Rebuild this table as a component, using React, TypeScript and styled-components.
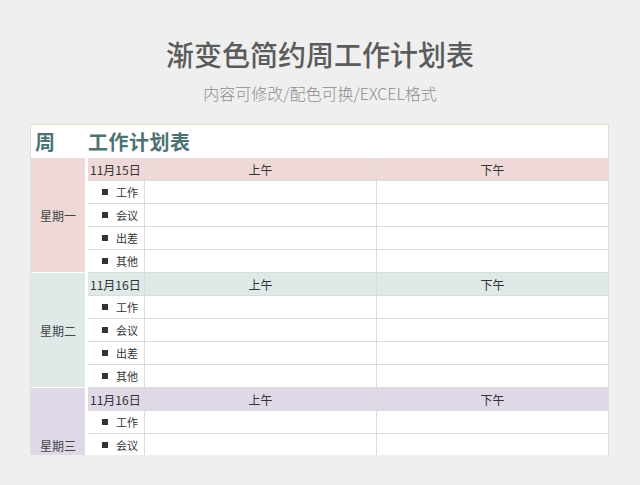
import React from 'react';
import styled, { createGlobalStyle } from 'styled-components';

const GlobalStyle = createGlobalStyle`
  html, body {
    margin: 0;
    padding: 0;
    background: #efefef;
  }
  body {
    font-family: "Noto Sans CJK SC", "Noto Sans", sans-serif;
  }
`;

const Page = styled.div`
  width: 640px;
  height: 485px;
  overflow: hidden;
  background: #efefef;
  display: flex;
  flex-direction: column;
`;

const Heading = styled.header`
  height: 124px;
  display: flex;
  flex-direction: column;
  align-items: center;
`;

const Title = styled.h1`
  margin: 34px 0 0;
  font-size: 28px;
  line-height: 40px;
  font-weight: 500;
  color: #5b5b5b;
`;

const Subtitle = styled.p`
  margin: 8px 0 0;
  font-size: 16px;
  line-height: 22px;
  font-weight: 300;
  color: #8e8e8e;
`;

const Sheet = styled.section`
  margin: 0 31px 0 30px;
  height: 331px;
  overflow: hidden;
  background: #fff;
  border-top: 1px solid #e0e3cb;
  border-left: 1px solid #e0e3cb;
  border-right: 1px solid #e0e3cb;
  box-sizing: border-box;
`;

const SheetHead = styled.div`
  height: 33px;
  display: grid;
  grid-template-columns: 57px 1fr;
  align-items: center;
  font-size: 20px;
  font-weight: 700;
  color: #4b7373;
  letter-spacing: 0.5px;
`;

const HeadCell = styled.div<{ $pad: number }>`
  padding-left: ${p => p.$pad}px;
`;

const Block = styled.div`
  display: grid;
  grid-template-columns: 57px 57px 232px 1fr;
  grid-template-rows: repeat(5, 23px);
`;

const DayCell = styled.div<{ $bg: string }>`
  grid-row: span 5;
  background: ${p => p.$bg};
  border-right: 3px solid #fff;
  border-bottom: 1px solid #fff;
  box-sizing: border-box;
  display: flex;
  align-items: center;
  justify-content: center;
  font-size: 12px;
  color: #444;
`;

const Cell = styled.div<{ $bg?: string; $last?: boolean }>`
  background: ${p => p.$bg || '#fff'};
  border-bottom: 1px solid #dcdcdc;
  border-right: ${p => (p.$last ? 'none' : '1px solid #dcdcdc')};
  box-sizing: border-box;
  display: flex;
  align-items: center;
  justify-content: center;
  font-size: 12px;
  color: #333;
`;

const DateCell = styled(Cell)`
  justify-content: flex-start;
  padding-left: 2px;
`;

const ItemCell = styled(Cell)`
  justify-content: flex-end;
  padding-right: 6px;
  font-size: 11px;
  gap: 8px;
`;

const Bullet = styled.span`
  width: 6px;
  height: 6px;
  background: #333;
`;

interface Day {
  label: string;
  date: string;
  color: string;
  rows: number; // rows still on screen, the sheet runs past the bottom
}

const days: Day[] = [
  { label: '星期一', date: '11月15日', color: '#eed9d8', rows: 4 },
  { label: '星期二', date: '11月16日', color: '#dee9e8', rows: 4 },
  { label: '星期三', date: '11月16日', color: '#e0d8e6', rows: 2 },
];

const items = ['工作', '会议', '出差', '其他'];

const App: React.FC = () => {
  return (
    <Page>
      <GlobalStyle />
      <Heading>
        <Title>渐变色简约周工作计划表</Title>
        <Subtitle>内容可修改/配色可换/EXCEL格式</Subtitle>
      </Heading>
      <Sheet>
        <SheetHead>
          <HeadCell $pad={4}>周</HeadCell>
          <HeadCell $pad={0}>工作计划表</HeadCell>
        </SheetHead>
        {days.map(day => (
          <Block key={day.label}>
            <DayCell $bg={day.color}>{day.label}</DayCell>
            <DateCell $bg={day.color}>{day.date}</DateCell>
            <Cell $bg={day.color}>上午</Cell>
            <Cell $bg={day.color} $last>下午</Cell>
            {items.slice(0, day.rows).map(item => (
              <React.Fragment key={item}>
                <ItemCell>
                  <Bullet />
                  {item}
                </ItemCell>
                <Cell />
                <Cell $last />
              </React.Fragment>
            ))}
          </Block>
        ))}
      </Sheet>
    </Page>
  );
};

export default App;
